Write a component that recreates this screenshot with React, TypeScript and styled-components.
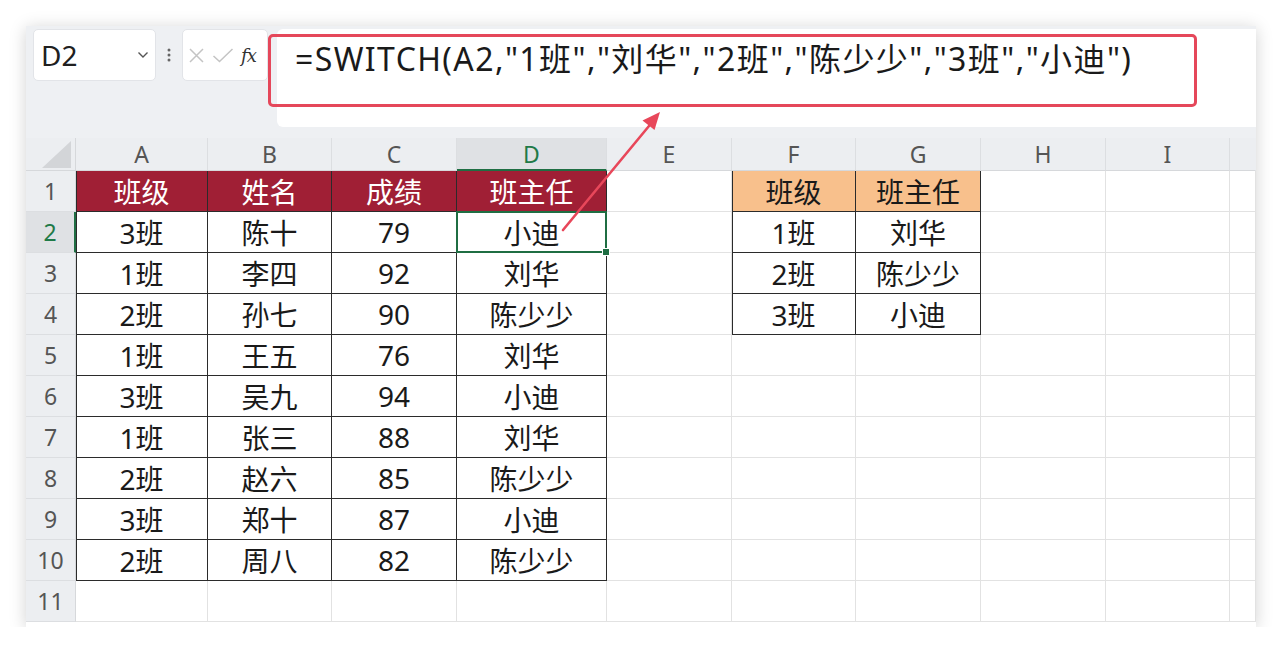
import styled, { createGlobalStyle, css } from "styled-components"

const GlobalStyle = createGlobalStyle`
  html, body {
    margin: 0;
    padding: 0;
    background: #fff;
  }
  body {
    font-family: "Noto Sans", "Noto Sans CJK SC", sans-serif;
    color: #1f1f1f;
  }
`

const columns = [
  { key: "A", width: 132 },
  { key: "B", width: 124 },
  { key: "C", width: 125 },
  { key: "D", width: 150 },
  { key: "E", width: 125 },
  { key: "F", width: 124 },
  { key: "G", width: 125 },
  { key: "H", width: 125 },
  { key: "I", width: 124 },
  { key: "", width: 0 },
]

const rows: string[][] = [
  ["班级", "姓名", "成绩", "班主任", "", "班级", "班主任"],
  ["3班", "陈十", "79", "小迪", "", "1班", "刘华"],
  ["1班", "李四", "92", "刘华", "", "2班", "陈少少"],
  ["2班", "孙七", "90", "陈少少", "", "3班", "小迪"],
  ["1班", "王五", "76", "刘华"],
  ["3班", "吴九", "94", "小迪"],
  ["1班", "张三", "88", "刘华"],
  ["2班", "赵六", "85", "陈少少"],
  ["3班", "郑十", "87", "小迪"],
  ["2班", "周八", "82", "陈少少"],
  [],
]

const SELECTED_COL = 3
const SELECTED_ROW = 1

const inMainTable = (r: number, c: number) => r <= 9 && c <= 3
const inLookupTable = (r: number, c: number) => r <= 3 && (c === 5 || c === 6)

const cellFill = (r: number, c: number) => {
  if (r === 0 && c <= 3) return "red"
  if (r === 0 && (c === 5 || c === 6)) return "orange"
  return "none"
}

const App = () => {
  return (
    <>
      <GlobalStyle />
      <Card>
        <Toolbar>
          <NameBox>
            <span>D2</span>
            <svg width="12" height="8" viewBox="0 0 12 8">
              <path d="M1.5 1.5 L6 6 L10.5 1.5" fill="none" stroke="#555" strokeWidth="1.4" />
            </svg>
          </NameBox>
          <Dots>
            <svg width="4" height="16" viewBox="0 0 4 16">
              <circle cx="2" cy="3" r="1.5" fill="#666" />
              <circle cx="2" cy="8" r="1.5" fill="#666" />
              <circle cx="2" cy="13" r="1.5" fill="#666" />
            </svg>
          </Dots>
          <FxBox>
            <svg width="17" height="17" viewBox="0 0 17 17">
              <path d="M2 2 L15 15 M15 2 L2 15" stroke="#c4c4c4" strokeWidth="1.5" />
            </svg>
            <svg width="22" height="17" viewBox="0 0 22 17">
              <path d="M1.5 9 L7.5 14.5 L20.5 2" fill="none" stroke="#c4c4c4" strokeWidth="1.5" />
            </svg>
            <FxLabel>fx</FxLabel>
          </FxBox>
          <FormulaBar>
            <FormulaText>=SWITCH(A2,"1班","刘华","2班","陈少少","3班","小迪")</FormulaText>
          </FormulaBar>
        </Toolbar>

        <Sheet>
          <Corner />
          {columns.map((col, c) => (
            <ColHeader key={`h${c}`} $active={c === SELECTED_COL} $last={c === columns.length - 1}>
              {col.key}
            </ColHeader>
          ))}
          {rows.map((row, r) => (
            <Row key={r} r={r} row={row} />
          ))}
        </Sheet>

        <Highlight />
        <Arrow width="1230" height="601" viewBox="0 0 1230 601">
          <line x1="537" y1="204" x2="623" y2="100" stroke="#e8475a" strokeWidth="2.6" strokeLinecap="round" />
          <polygon points="634,86 628.5,104 616.5,94.5" fill="#e8475a" />
        </Arrow>
      </Card>
    </>
  )
}

const Row = ({ r, row }: { r: number; row: string[] }) => (
  <>
    <RowHeader $active={r === SELECTED_ROW}>{r + 1}</RowHeader>
    {columns.map((_, c) => {
      const boxed = inMainTable(r, c) || inLookupTable(r, c)
      return (
        <Cell
          key={c}
          $fill={cellFill(r, c)}
          $boxed={boxed}
          $boxLeft={boxed && (c === 0 || c === 5)}
          $selected={r === SELECTED_ROW && c === SELECTED_COL}
        >
          {row[c] ?? ""}
        </Cell>
      )
    })}
  </>
)

export default App

const Card = styled.div`
  position: relative;
  margin: 26px 0 0 26px;
  width: 1230px;
  height: 601px;
  background: #fff;
  overflow: hidden;
  box-shadow: 0 2px 16px rgba(0, 0, 0, 0.18);
`

const Toolbar = styled.div`
  display: flex;
  align-items: flex-start;
  height: 112px;
  padding: 3px 0 0 7px;
  box-sizing: border-box;
  background: #eef0f3;
`

const NameBox = styled.div`
  display: flex;
  align-items: center;
  justify-content: space-between;
  width: 123px;
  height: 52px;
  box-sizing: border-box;
  padding: 0 6px 0 7px;
  background: #fff;
  border: 1px solid #e2e4e8;
  border-radius: 5px;
  font-size: 28px;
  color: #202020;
`

const Dots = styled.div`
  display: flex;
  align-items: center;
  justify-content: center;
  width: 26px;
  height: 52px;
`

const FxBox = styled.div`
  display: flex;
  align-items: center;
  gap: 7px;
  width: 86px;
  height: 52px;
  box-sizing: border-box;
  padding-left: 5px;
  background: #fff;
  border: 1px solid #e2e4e8;
  border-radius: 5px;
`

const FxLabel = styled.span`
  font-family: "DejaVu Serif", "Liberation Serif", serif;
  font-style: italic;
  font-size: 18px;
  color: #333;
  letter-spacing: -1px;
`

const FormulaBar = styled.div`
  flex: 1;
  height: 98px;
  margin-left: 9px;
  box-sizing: border-box;
  padding: 11px 0 0 18px;
  background: #fff;
  border-radius: 6px 0 0 6px;
`

const FormulaText = styled.div`
  font-size: 32px;
  line-height: 38px;
  letter-spacing: 1.4px;
  color: #1a1a1a;
  white-space: nowrap;
`

const Sheet = styled.div`
  display: grid;
  grid-template-columns: 50px ${columns.map(c => (c.width ? `${c.width}px` : "1fr")).join(" ")};
  grid-template-rows: 33px;
  grid-auto-rows: 41px;
`

const headerBase = css`
  display: flex;
  align-items: center;
  justify-content: center;
  box-sizing: border-box;
  background: #eceef1;
  color: #555;
  font-size: 23px;
`

const Corner = styled.div`
  position: relative;
  ${headerBase};
  border-bottom: 1px solid #d6d8db;
  border-right: 1px solid #d6d8db;

  &::after {
    content: "";
    position: absolute;
    right: 4px;
    bottom: 2px;
    width: 29px;
    height: 27px;
    background: #d3d5d8;
    clip-path: polygon(100% 0, 100% 100%, 0 100%);
  }
`

const ColHeader = styled.div<{ $active: boolean; $last: boolean }>`
  ${headerBase};
  border-right: 1px solid ${({ $last }) => ($last ? "transparent" : "#dcdee1")};
  border-bottom: ${({ $active }) => ($active ? "2px solid #1f6e43" : "1px solid #d6d8db")};
  background: ${({ $active }) => ($active ? "#dfe1e4" : "#eceef1")};
  color: ${({ $active }) => ($active ? "#1f7a48" : "#555")};
`

const RowHeader = styled.div<{ $active: boolean }>`
  ${headerBase};
  border-bottom: 1px solid #dcdee1;
  border-right: ${({ $active }) => ($active ? "2px solid #1f6e43" : "1px solid #d6d8db")};
  background: ${({ $active }) => ($active ? "#dfe1e4" : "#eceef1")};
  color: ${({ $active }) => ($active ? "#1f7a48" : "#555")};
`

const fills: Record<string, string> = {
  red: "#a01f35",
  orange: "#f8c08c",
  none: "#fff",
}

const Cell = styled.div<{
  $fill: string
  $boxed: boolean
  $boxLeft: boolean
  $selected: boolean
}>`
  position: relative;
  display: flex;
  align-items: center;
  justify-content: center;
  box-sizing: border-box;
  font-size: 28px;
  white-space: nowrap;
  background: ${({ $fill }) => fills[$fill]};
  color: ${({ $fill }) => ($fill === "red" ? "#fff" : "#1a1a1a")};
  border-right: 1px solid ${({ $boxed }) => ($boxed ? "#2b2b2b" : "#e2e2e2")};
  border-bottom: 1px solid ${({ $boxed }) => ($boxed ? "#2b2b2b" : "#e2e2e2")};
  box-shadow: ${({ $boxLeft }) => ($boxLeft ? "inset 1px 0 0 #2b2b2b" : "none")};

  ${({ $selected }) =>
    $selected &&
    css`
      &::after {
        content: "";
        position: absolute;
        inset: -1px -1px -1px -1px;
        border: 2px solid #1f6e43;
      }
      &::before {
        content: "";
        position: absolute;
        right: -4px;
        bottom: -4px;
        width: 6px;
        height: 6px;
        background: #1f6e43;
        border: 1px solid #fff;
        z-index: 2;
      }
    `}
`

const Highlight = styled.div`
  position: absolute;
  left: 242px;
  top: 8px;
  width: 929px;
  height: 73px;
  box-sizing: border-box;
  border: 3px solid #e5475a;
  border-radius: 5px;
  pointer-events: none;
`

const Arrow = styled.svg`
  position: absolute;
  left: 0;
  top: 0;
  pointer-events: none;
`
